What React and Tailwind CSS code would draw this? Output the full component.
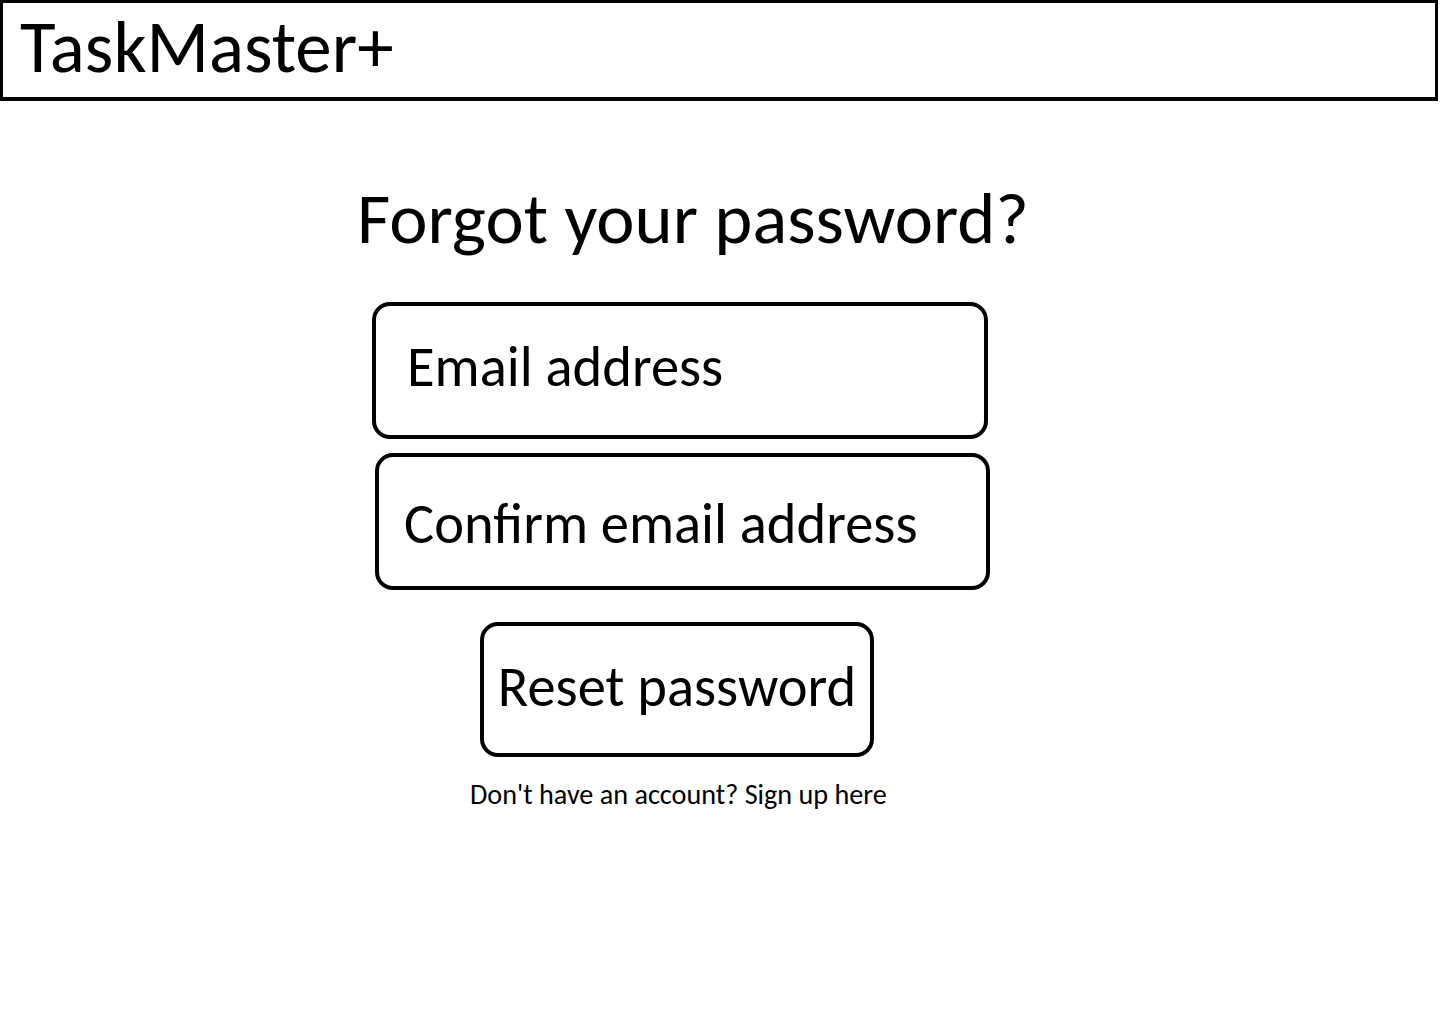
import React from "react";

export default function App() {
  return (
    <div className="min-h-screen bg-white text-black font-['Carlito','Calibri','Liberation_Sans',sans-serif]">
      <header className="h-[101px] w-[1438px] border-[3px] border-b-4 border-black pl-[17px] pt-[8px]">
        <div className="text-[73px] leading-none">TaskMaster+</div>
      </header>

      <main className="flex flex-col items-start">
        <h1 className="ml-[357px] mt-[81px] text-[72.5px] font-normal leading-none">
          Forgot your password?
        </h1>

        <div className="ml-[372px] mt-[47px] h-[137px] w-[616px] rounded-[18px] border-4 border-black pl-[31px] pt-[33px]">
          <span className="block text-[56.5px] leading-none">Email address</span>
        </div>

        <div className="ml-[375px] mt-[14px] h-[137px] w-[615px] rounded-[18px] border-4 border-black pl-[25px] pt-[39px]">
          <span className="block text-[56.5px] leading-none">Confirm email address</span>
        </div>

        <button className="ml-[480px] mt-[32px] flex h-[135px] w-[394px] items-start justify-center rounded-[18px] border-4 border-black pt-[33px]">
          <span className="block text-[56.5px] leading-none">Reset password</span>
        </button>

        <p className="ml-[470px] mt-[24px] text-[28.2px] leading-none">
          Don't have an account? Sign up here
        </p>
      </main>
    </div>
  );
}
